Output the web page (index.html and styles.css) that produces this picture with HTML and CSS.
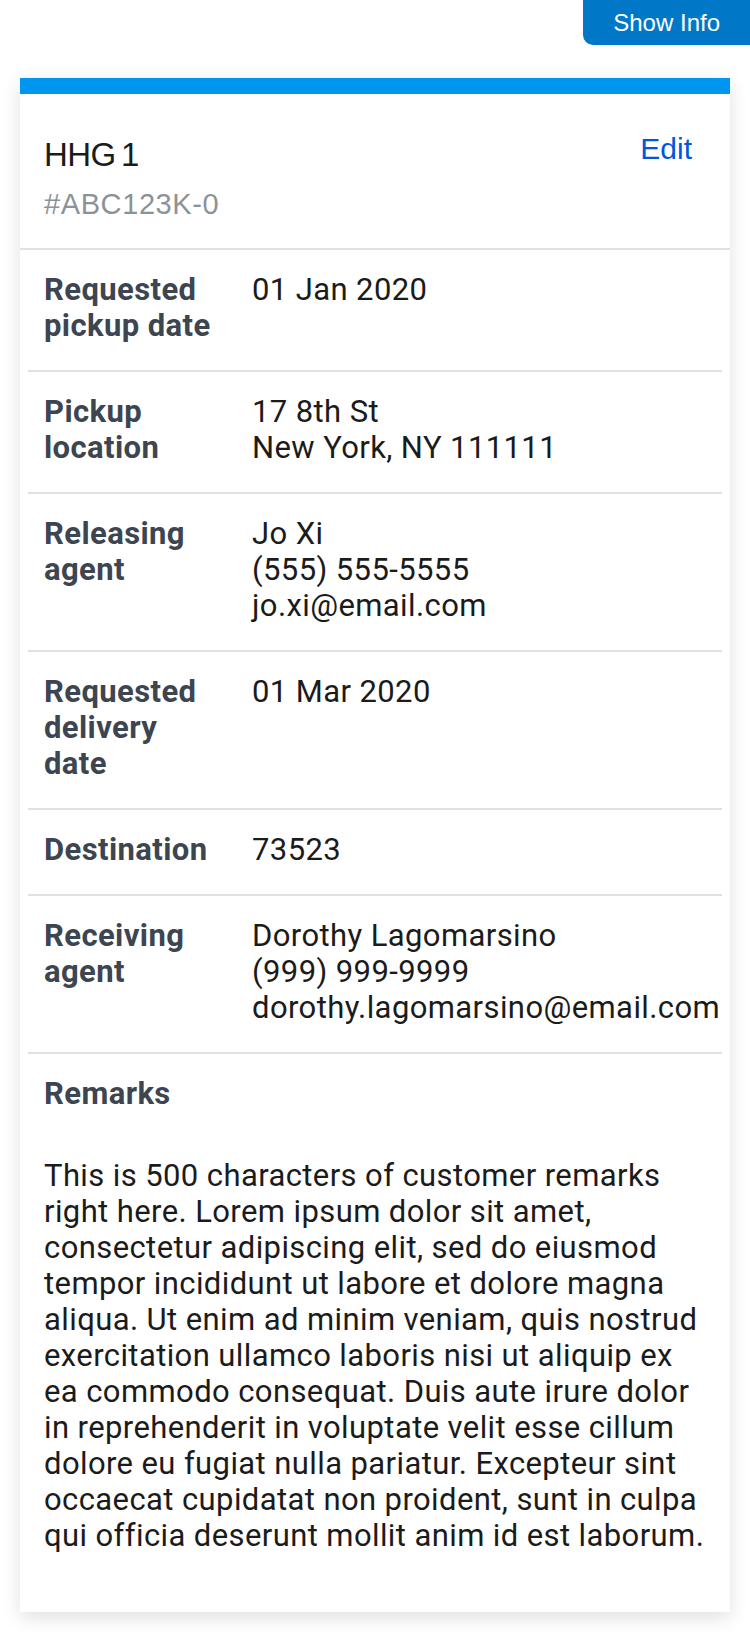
FILE: index.html
```html
<!DOCTYPE html>
<html lang="en">
<head>
<meta charset="utf-8">
<title>HHG 1</title>
<link rel="stylesheet" href="styles.css">
</head>
<body>
<div class="topbar">
  <button class="show-info" type="button">Show Info</button>
</div>
<main class="page">
  <section class="card">
    <header class="card-header">
      <div class="card-title">
        <h2 class="title">HHG 1</h2>
        <p class="code">#ABC123K-0</p>
      </div>
      <a class="edit" href="#">Edit</a>
    </header>
    <dl class="details">
      <div class="row">
        <dt>Requested pickup date</dt>
        <dd>01 Jan 2020</dd>
      </div>
      <div class="row">
        <dt>Pickup location</dt>
        <dd>17 8th St<br>New York, NY 111111</dd>
      </div>
      <div class="row">
        <dt>Releasing agent</dt>
        <dd>Jo Xi<br>(555) 555-5555<br>jo.xi@email.com</dd>
      </div>
      <div class="row">
        <dt>Requested delivery date</dt>
        <dd>01 Mar 2020</dd>
      </div>
      <div class="row">
        <dt>Destination</dt>
        <dd>73523</dd>
      </div>
      <div class="row">
        <dt>Receiving agent</dt>
        <dd>Dorothy Lagomarsino<br>(999) 999-9999<br>dorothy.lagomarsino@email.com</dd>
      </div>
    </dl>
    <div class="remarks">
      <h3 class="remarks-label">Remarks</h3>
      <p class="remarks-text">This is 500 characters of customer remarks right here. Lorem ipsum dolor sit amet, consectetur adipiscing elit, sed do eiusmod tempor incididunt ut labore et dolore magna aliqua. Ut enim ad minim veniam, quis nostrud exercitation ullamco laboris nisi ut aliquip ex ea commodo consequat. Duis aute irure dolor in reprehenderit in voluptate velit esse cillum dolore eu fugiat nulla pariatur. Excepteur sint occaecat cupidatat non proident, sunt in culpa qui officia deserunt mollit anim id est laborum.</p>
    </div>
  </section>
</main>
</body>
</html>
```

FILE: styles.css
```css
* {
  box-sizing: border-box;
}

body {
  margin: 0;
  background: #ffffff;
  font-family: Roboto, "Liberation Sans", Arial, sans-serif;
  color: #1b1b1b;
}

.topbar {
  display: flex;
  justify-content: flex-end;
}

.show-info {
  height: 45px;
  padding: 0 30px;
  border: none;
  border-radius: 0 0 0 10px;
  background: #0078c7;
  color: #ffffff;
  font-family: "Liberation Sans", Arial, sans-serif;
  font-size: 24px;
  line-height: 45px;
}

.page {
  padding: 33px 20px 20px;
}

.card {
  background: #ffffff;
  border-top: 16px solid #0096f0;
  box-shadow: 0 6px 18px rgba(0, 0, 0, 0.12);
  padding-bottom: 58px;
}

.card-header {
  display: flex;
  justify-content: space-between;
  align-items: flex-start;
  padding: 41px 38px 27px 24px;
  border-bottom: 2px solid #dfe1e2;
}

.title {
  margin: 0;
  font-family: "Liberation Sans", Arial, sans-serif;
  font-weight: 400;
  font-size: 33px;
  line-height: 40px;
  letter-spacing: -0.6px;
  word-spacing: -3px;
  color: #1b1b1b;
}

.code {
  margin: 12px 0 0;
  font-family: "Liberation Sans", Arial, sans-serif;
  font-size: 29px;
  line-height: 34px;
  letter-spacing: 0.6px;
  color: #8d9297;
}

.edit {
  margin-top: -4px;
  font-family: "Liberation Sans", Arial, sans-serif;
  font-size: 30px;
  line-height: 36px;
  color: #0056dc;
  text-decoration: none;
}

.details {
  margin: 0;
}

.row {
  display: grid;
  grid-template-columns: 175px 1fr;
  column-gap: 33px;
  margin: 0 8px;
  padding: 22px 0 26px 16px;
  border-bottom: 2px solid #dfe1e2;
  font-size: 31px;
  line-height: 36px;
  letter-spacing: 0.4px;
}

.row dt {
  font-weight: 700;
  color: #3d4551;
}

.row dd {
  margin: 0;
  color: #1b1b1b;
}

.remarks {
  margin: 0 8px;
  padding: 22px 8px 0 16px;
  font-size: 31px;
  line-height: 36px;
  letter-spacing: 0.4px;
}

.remarks-label {
  margin: 0;
  font-size: 31px;
  font-weight: 700;
  color: #3d4551;
}

.remarks-text {
  margin: 46px 0 0;
  color: #1b1b1b;
}
```
